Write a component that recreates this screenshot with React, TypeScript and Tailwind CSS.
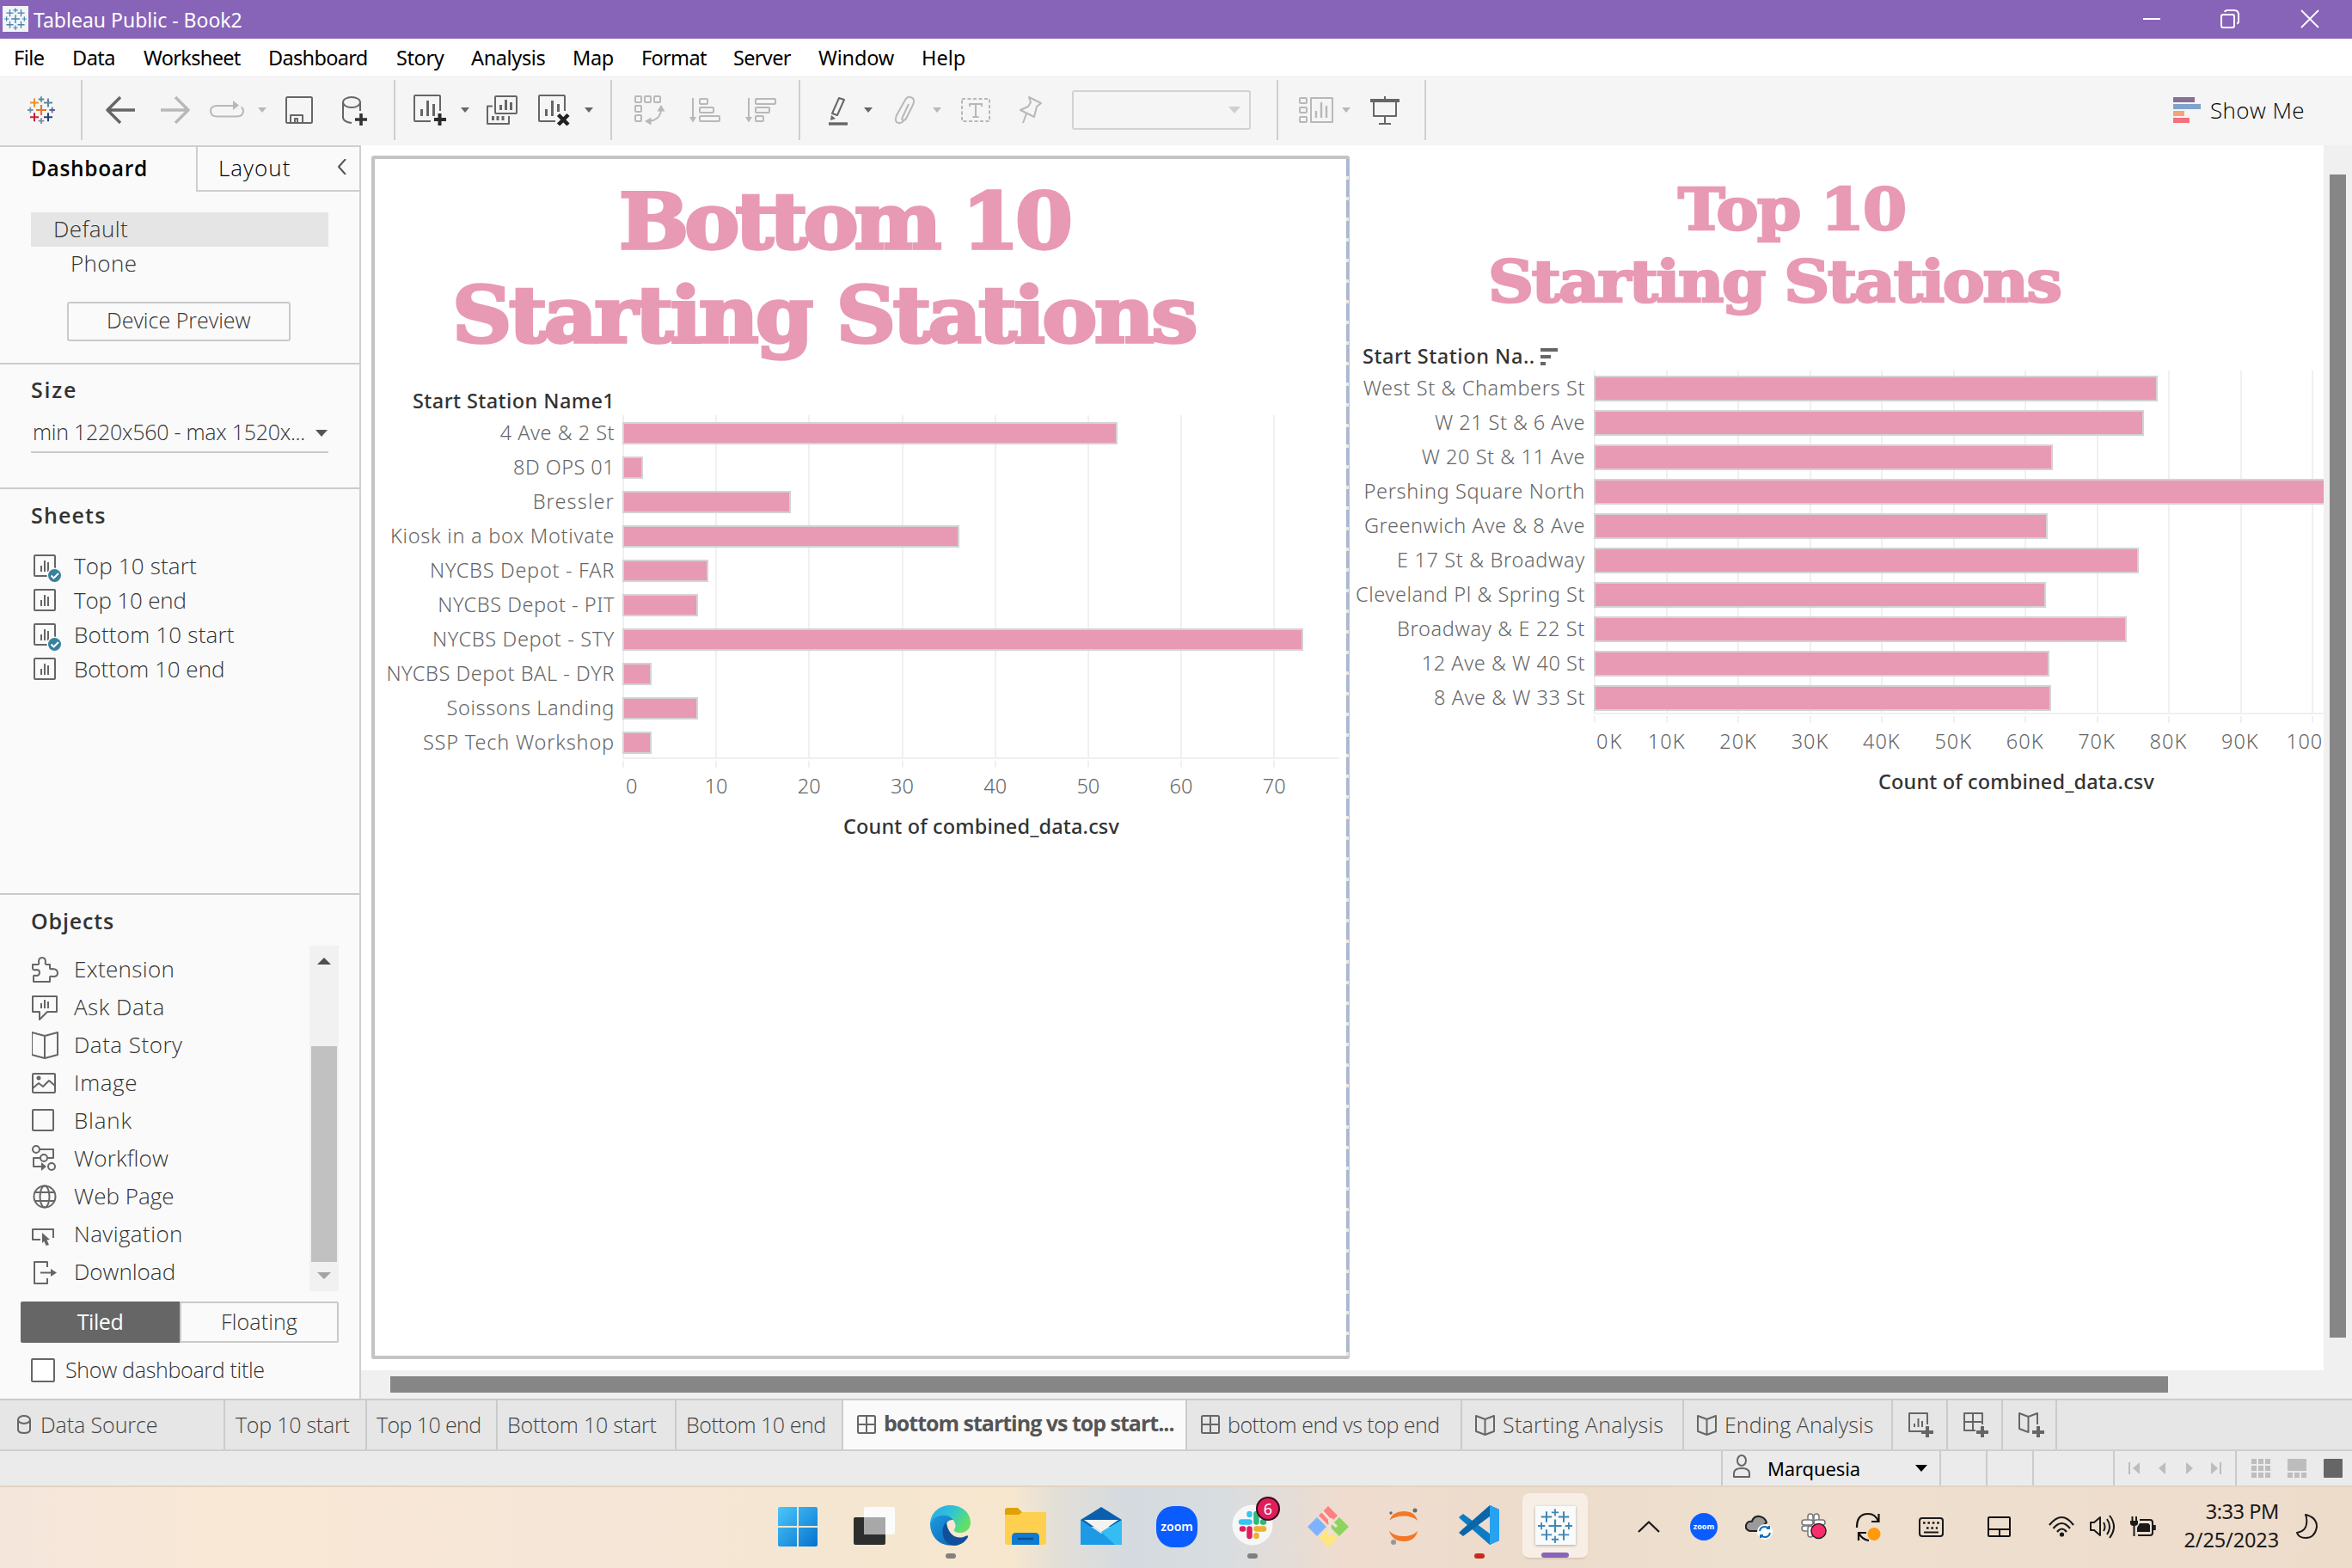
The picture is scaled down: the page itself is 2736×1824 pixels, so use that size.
import React, { useLayoutEffect, useRef, useState } from "react";

const UI = "font-['Open_Sans',sans-serif]";
const SEG = "font-['Noto_Sans',sans-serif]";

/* A single-line label whose letters are spread evenly over a given width. */
function T({ w, className = "", children }: { w: number; className?: string; children: string }) {
  const ref = useRef<HTMLSpanElement>(null);
  const [spacing, setSpacing] = useState(0);
  useLayoutEffect(() => {
    const el = ref.current;
    if (!el) return;
    el.style.letterSpacing = "0px";
    const natural = el.offsetWidth;
    const next = (w - natural) / children.length;
    el.style.letterSpacing = `${next}px`;
    setSpacing(next);
  }, [w, children]);
  return (
    <span ref={ref} style={{ letterSpacing: spacing }} className={`inline-block shrink-0 whitespace-pre ${className}`}>
      {children}
    </span>
  );
}

type SvgProps = { w: number; h: number; className?: string; children: React.ReactNode; color?: string; sw?: number };
function Svg({ w, h, className = "", children, color = "#666", sw = 2 }: SvgProps) {
  return (
    <svg width={w} height={h} viewBox={`0 0 ${w} ${h}`} className={`block shrink-0 ${className}`} fill="none" stroke={color} strokeWidth={sw} strokeLinejoin="round">
      {children}
    </svg>
  );
}

const crosses: [number, number, number, number, string][] = [
  [16, 16, 6, 2.2, "#e8762c"],
  [16, 3.5, 3.3, 1.8, "#59879b"],
  [8, 7.5, 5, 2, "#eb9129"],
  [24, 7.5, 5, 2, "#59879b"],
  [3.3, 16, 3.3, 1.8, "#7099a6"],
  [28.7, 16, 3.3, 1.8, "#5b6591"],
  [8, 24.3, 5, 2, "#c72035"],
  [24, 24.3, 5, 2, "#1f447e"],
  [16, 28.6, 3.3, 1.8, "#7b86ab"],
];
function TableauMark({ size, mono }: { size: number; mono?: boolean }) {
  return (
    <svg width={size} height={size} viewBox="0 0 32 32" className="block shrink-0">
      {crosses.map(([x, y, r, s, c], i) => (
        <path key={i} d={`M${x - r} ${y}H${x + r}M${x} ${y - r}V${y + r}`} stroke={mono ? "#3f86b3" : c} strokeWidth={mono ? s * 0.8 : s} />
      ))}
    </svg>
  );
}

function Caret({ className = "", color = "#666" }: { className?: string; color?: string }) {
  return (
    <Svg w={10} h={6} className={className} color="none">
      <path d="M0 0H10L5 6Z" fill={color} />
    </Svg>
  );
}
const Sep = ({ className = "" }: { className?: string }) => <div className={`h-[70px] w-[2px] shrink-0 bg-[#cfcfcf] ${className}`} />;

function TitleBar() {
  return (
    <div className="flex h-[45px] shrink-0 items-center bg-[#8764b8] pl-[3px] text-white">
      <div className="mb-[2px] flex h-[30px] w-[30px] items-center justify-center bg-[#f4f4f8]"><TableauMark size={26} mono /></div>
      <T w={243} className={`ml-[6px] mt-[2px] text-[23px] leading-none ${SEG}`}>Tableau Public - Book2</T>
      <div className="ml-auto flex items-center pb-[2px] pr-[38px]">
        <Svg w={20} h={20} color="#fff"><path d="M0 10H20" /></Svg>
        <Svg w={22} h={22} color="#fff" className="ml-[70px]">
          <rect x="1" y="6" width="15" height="15" rx="2" /><path d="M5 3Q5.500 1 8 1H16Q21 1 21 6V14Q21 16 19 16.500" />
        </Svg>
        <Svg w={22} h={22} color="#fff" sw={1.8} className="ml-[71px]"><path d="M1 1L21 21M21 1L1 21" /></Svg>
      </div>
    </div>
  );
}

const menu: [string, string, number][] = [
  ["File", "w-[68px]", 36], ["Data", "w-[83px]", 50], ["Worksheet", "w-[145px]", 113], ["Dashboard", "w-[149px]", 116],
  ["Story", "w-[87px]", 55], ["Analysis", "w-[118px]", 86], ["Map", "w-[80px]", 48], ["Format", "w-[107px]", 76],
  ["Server", "w-[99px]", 67], ["Window", "w-[120px]", 88], ["Help", "w-[80px]", 51],
];
function MenuBar() {
  return (
    <div className={`flex h-[43px] shrink-0 items-center bg-white pl-[16px] pt-[3px] text-[23.5px] leading-none text-black ${SEG}`}>
      {menu.map(([t, c, w]) => <div key={t} className={`shrink-0 ${c}`}><T w={w}>{t}</T></div>)}
    </div>
  );
}

const G = "#666";
const L = "#b8b8b8";
function Toolbar() {
  return (
    <div className="flex h-[81px] shrink-0 items-center bg-[#f5f5f5] pb-[1px] pl-[32px]">
      <TableauMark size={32} />
      <Sep className="ml-[30px]" />
      <Svg w={34} h={32} color={G} sw={3.4} className="ml-[27px]"><path d="M34 16H3M17 1L2 16L17 31" /></Svg>
      <Svg w={34} h={32} color={L} sw={3.4} className="ml-[30px]"><path d="M0 16H31M17 1L32 16L17 31" /></Svg>
      <Svg w={40} h={22} color={L} className="ml-[23px] mb-[4px]">
        <path d="M27 8H9Q1 8 1 14Q1 20.500 9 20.500H31Q39 20.500 39 14Q39 11 36.500 9.500" /><path d="M27 2L34 7.500L27 13Z" fill={L} stroke="none" />
      </Svg>
      <Caret className="ml-[16px]" color={L} />
      <Svg w={32} h={32} color={G} className="ml-[22px]"><rect x="1" y="1" width="30" height="30" rx="1.500" /><path d="M6 31V22H20V31M11 31V26H14V31" /></Svg>
      <Svg w={30} h={34} color={G} className="ml-[34px] mt-[2px]">
        <ellipse cx="11" cy="7" rx="10" ry="6" /><path d="M1 7V25Q2 30 11 31M21 7V17" /><path d="M22 20V34M15 27H29" stroke="#333" strokeWidth="3.600" />
      </Svg>
      <Sep className="ml-[30px]" />
      <Svg w={38} h={36} color={G} className="ml-[21px]">
        <path d="M31 19V2Q31 1 30 1H2Q1 1 1 2V30Q1 31 2 31H20" /><path d="M9.500 17V25M16.500 7V25M23.500 11V25" strokeWidth="3" strokeLinejoin="miter" /><path d="M30.500 22V36M24 29H38" stroke="#2b2b2b" strokeWidth="4" />
      </Svg>
      <Caret className="ml-[17px]" />
      <Svg w={36} h={34} color={G} className="ml-[20px] mb-[1px]">
        <rect x="10" y="1" width="25" height="20" rx="1" /><path d="M16.500 11V17M22.500 5V17M28.500 8V17" strokeWidth="3" /><path d="M7 12.500H1V33H26V24" /><path d="M7.500 24V29M13 24V29M19 24V29" strokeWidth="3" />
      </Svg>
      <Svg w={38} h={36} color={G} className="ml-[24px]">
        <path d="M31 19V2Q31 1 30 1H2Q1 1 1 2V30Q1 31 2 31H20" /><path d="M9.500 17V25M16.500 7V25M23.500 11V20" strokeWidth="3" /><path d="M23.500 23.500L35 35M35 23.500L23.500 35" stroke="#222" strokeWidth="4.500" />
      </Svg>
      <Caret className="ml-[16px]" />
      <Sep className="ml-[20px]" />
      <Svg w={36} h={36} color={L} className="ml-[26px]">
        <rect x="1" y="2" width="7" height="7" rx="1" /><rect x="12" y="2" width="7" height="7" rx="1" /><rect x="23" y="2" width="7" height="7" rx="1" /><rect x="1" y="13" width="7" height="7" rx="1" /><rect x="1" y="24" width="7" height="7" rx="1" />
        <path d="M31 18Q30 29 18 31" /><path d="M31 12L35.500 19.500H26.500ZM12 31L19.500 26.500V35.500Z" fill={L} stroke="none" />
      </Svg>
      <Svg w={36} h={30} color={L} className="ml-[28px]">
        <path d="M4 1V24" /><path d="M0 23H8L4 29.500Z" fill={L} stroke="none" /><rect x="12" y="2" width="9" height="6" rx="1" /><rect x="12" y="12" width="16" height="6" rx="1" /><rect x="12" y="22" width="23" height="6" rx="1" />
      </Svg>
      <Svg w={36} h={30} color={L} className="ml-[29px]">
        <path d="M4 1V24" /><path d="M0 23H8L4 29.500Z" fill={L} stroke="none" /><rect x="12" y="2" width="23" height="6" rx="1" /><rect x="12" y="12" width="16" height="6" rx="1" /><rect x="12" y="22" width="9" height="6" rx="1" />
      </Svg>
      <Sep className="ml-[26px]" />
      <Svg w={22} h={34} color={G} className="ml-[33px] mt-[2px]">
        <path d="M12 2L18 4L10 22L4 20Z" /><path d="M3 22L8 26L2 28Z" fill={G} stroke="none" /><path d="M0 32H22" strokeWidth="3.400" />
      </Svg>
      <Caret className="ml-[19px]" />
      <Svg w={25} h={34} color={L} className="ml-[25px]">
        <path d="M17 10L10 25Q8 29 11 29Q13 29 14.500 26L22 11Q25 3 19 2Q15 1 12 7L3 23Q0 31 5 32Q9 33 12 28" />
      </Svg>
      <Caret className="ml-[20px]" color={L} />
      <Svg w={34} h={28} color={L} className="ml-[23px]">
        <rect x="1" y="1" width="32" height="26" strokeDasharray="4 2.500" /><path d="M10 10V7H24V10M17 7V22M13.500 22H20.500" />
      </Svg>
      <Svg w={26} h={32} color={L} className="ml-[34px]">
        <path d="M11 1L25 8L20 12L17 24L1 16L10 12L13 7ZM8 20L4 31" />
      </Svg>
      <div className="ml-[35px] flex h-[46px] w-[208px] shrink-0 items-center justify-end rounded-[3px] border-2 border-[#d3d3d3] pr-[10px]">
        <Svg w={14} h={8} color="none"><path d="M0 0H14L7 8Z" fill="#cfcfcf" /></Svg>
      </div>
      <Sep className="ml-[30px]" />
      <Svg w={40} h={30} color={L} className="ml-[24px]">
        <rect x="1" y="1" width="8" height="6" rx="1" /><rect x="1" y="12" width="8" height="6" rx="1" /><rect x="1" y="23" width="8" height="6" rx="1" /><rect x="14" y="1" width="25" height="28" /><path d="M20 16V24M26 6V24M32 10V24" strokeWidth="2.400" />
      </Svg>
      <Caret className="ml-[10px]" color={L} />
      <Svg w={34} h={34} color={G} className="ml-[23px] mt-[2px]">
        <path d="M0 5H34" strokeWidth="4" /><path d="M17 0V4M4 6V23H30V6M17 23V32M10 32H24" />
      </Svg>
      <Sep className="ml-[29px]" />
      <div className="ml-auto flex items-center">
        <div className="flex w-[32px] flex-col gap-[2px]">
          <div className="h-[6px] w-[25px] bg-[#876f95]" /><div className="h-[6px] w-[32px] bg-[#7fa3cb]" /><div className="h-[6px] w-[13px] bg-[#f3a478]" /><div className="h-[6px] w-[19px] bg-[#f8707c]" />
        </div>
        <T w={110} className={`ml-[11px] mr-[55px] text-[26px] font-light leading-none text-black ${UI}`}>Show Me</T>
      </div>
    </div>
  );
}

function SheetIcon({ checked }: { checked?: boolean }) {
  return (
    <Svg w={34} h={34} className="mt-[6px]" color="#666">
      <rect x="1" y="1" width="24" height="24" rx="1" /><path d="M9 13V20M13 7V20M17 9V20" />
      {checked && <><circle cx="24.500" cy="24.500" r="9" fill="#fafafa" stroke="none" /><circle cx="24.500" cy="24.500" r="7.500" fill="#37819f" stroke="none" /><path d="M20.500 24.500L23.500 27.500L29 22" stroke="#fff" /></>}
    </Svg>
  );
}

const objects: [string, number, React.ReactNode][] = [
  ["Extension", 117, <path d="M1 10H7Q9 10 8 7Q8 2 12 2Q16 2 16 7Q15 10 17 10H21V14Q21 16 24 15Q30 15 30 20Q30 24 25 24Q21 23 21 25V30H2V24Q2 22 5 23Q9 23 9 19Q9 16 5 16Q1 17 1 14Z" />],
  ["Ask Data", 106, <path d="M1 3H29V21H18L9 30V21H1ZM11 11V17M15 7V17M19 9V17" />],
  ["Data Story", 127, <path d="M0 1L15 5L30 1V27L15 31L0 27ZM15 5V31" />],
  ["Image", 74, <><rect x="1" y="5" width="26" height="22" rx="1" /><path d="M1 22L8 16L13 20L20 13L27 19" /><circle cx="8" cy="10" r="1.500" fill="#666" /></>],
  ["Blank", 68, <rect x="1" y="3" width="24" height="24" rx="1" />],
  ["Workflow", 110, <><circle cx="5" cy="5" r="4" /><circle cx="14" cy="15" r="4" /><circle cx="23" cy="25" r="4" /><path d="M9 5H25V15H18M10 15H2V25H12" /><path d="M11 20L17 25L11 30Z" fill="#666" stroke="none" /></>],
  ["Web Page", 116, <><circle cx="15" cy="16" r="12.500" /><ellipse cx="15" cy="16" rx="5.500" ry="12.500" /><path d="M4 11H26M4 21H26" /></>],
  ["Navigation", 127, <><path d="M10 22H1V10H25V20" /><path d="M12 14L21 22L17.500 22.500L20 28L16.500 29L14.500 24L12 26Z" fill="#666" stroke="none" /></>],
  ["Download", 118, <><path d="M18 10V4H3V29H18V23M10 16.500H24" /><path d="M22 12L29 16.500L22 21Z" fill="#666" stroke="none" /></>],
];

const sheets: [string, number, boolean][] = [["Top 10 start", 143, true], ["Top 10 end", 131, false], ["Bottom 10 start", 187, true], ["Bottom 10 end", 175, false]];

function Sidebar() {
  return (
    <div className={`flex w-[420px] shrink-0 flex-col border-r-2 border-t-2 border-[#cfcfcf] bg-[#fafafa] text-[26px] leading-none text-[#333] [&_span]:mb-[2px] ${UI}`}>
      <div className="flex h-[52px] shrink-0">
        <div className="flex w-[228px] items-center pl-[36px] text-black"><T w={136} className="text-[24.5px] font-semibold">Dashboard</T></div>
        <div className="flex flex-1 items-center border-b-2 border-l-2 border-[#cfcfcf] pl-[24px] text-black">
          <T w={84} className="font-light">Layout</T>
          <Svg w={12} h={18} className="mb-[4px] ml-[54px]" color="#555"><path d="M10 0L2 9L10 18" /></Svg>
        </div>
      </div>
      <div className="ml-[36px] mt-[24px] flex h-[40px] w-[346px] shrink-0 items-center bg-[#e5e5e5] pl-[26px]"><T w={87} className="font-light">Default</T></div>
      <div className="flex h-[40px] shrink-0 items-center pl-[82px]"><T w={77} className="font-light">Phone</T></div>
      <div className="ml-[78px] mt-[24px] flex h-[46px] w-[260px] shrink-0 items-center rounded-[3px] border-2 border-[#c9c9c9] pb-[2px] pl-[44px]"><T w={168} className="text-[25px] font-light">Device Preview</T></div>
      <div className="mt-[25px] h-[2px] shrink-0 bg-[#cbcbcb]" />
      <div className="flex h-[60px] shrink-0 items-center pl-[36px]"><T w={54} className="text-[25px] font-semibold">Size</T></div>
      <div className="ml-[36px] flex h-[43px] w-[346px] shrink-0 items-center border-b-2 border-[#c9c9c9] pb-[2px] pl-[2px]">
        <T w={317} className="text-[25px] font-light">min 1220x560 - max 1520x...</T>
        <Svg w={14} h={8} className="ml-[12px]" color="none"><path d="M0 0H14L7 8Z" fill="#555" /></Svg>
      </div>
      <div className="mt-[40px] h-[2px] shrink-0 bg-[#cbcbcb]" />
      <div className="flex h-[62px] shrink-0 items-center pl-[36px]"><T w={88} className="text-[25px] font-semibold">Sheets</T></div>
      <div className="mt-[8px] flex flex-col">
        {sheets.map(([t, w, c]) => (
          <div key={t} className="flex h-[40px] items-center pl-[39px]"><SheetIcon checked={c} /><T w={w} className="ml-[13px] font-light">{t}</T></div>
        ))}
      </div>
      <div className="flex-1" />
      <div className="h-[2px] shrink-0 bg-[#cbcbcb]" />
      <div className="flex h-[59px] shrink-0 items-center pl-[36px] pt-[4px]"><T w={97} className="text-[25px] font-semibold">Objects</T></div>
      <div className="flex h-[402px] shrink-0">
        <div className="w-[360px] pt-[6px]">
          {objects.map(([t, w, icon]) => (
            <div key={t} className="flex h-[44px] items-center pl-[37px]">
              <Svg w={32} h={32}>{icon}</Svg>
              <T w={w} className="ml-[17px] font-light">{t}</T>
            </div>
          ))}
        </div>
        <div className="flex w-[34px] flex-col items-center bg-[#f1f1f1] pt-[14px]">
          <Svg w={16} h={8} color="none"><path d="M0 8H16L8 0Z" fill="#4f4f4f" /></Svg>
          <div className="mt-[95px] h-[251px] w-[30px] bg-[#c1c1c1]" />
          <Svg w={16} h={8} color="none" className="mt-[12px]"><path d="M0 0H16L8 8Z" fill="#a3a3a3" /></Svg>
        </div>
      </div>
      <div className="ml-[24px] mt-[12px] flex h-[48px] w-[370px] shrink-0 text-[25px]">
        <div className="flex w-[185px] items-center justify-center rounded-l-[2px] bg-[#666] text-white"><T w={54}>Tiled</T></div>
        <div className="flex w-[185px] items-center justify-center rounded-r-[2px] border-2 border-[#c9c9c9] font-light"><T w={89}>Floating</T></div>
      </div>
      <div className="mb-[19px] ml-[36px] mt-[18px] flex h-[28px] shrink-0 items-center text-[25px] font-light">
        <div className="h-[28px] w-[28px] rounded-[2px] border-2 border-[#666] bg-white" />
        <T w={232} className="ml-[12px]">Show dashboard title</T>
      </div>
    </div>
  );
}

type Row = [string, number, number];
const bottomRows: Row[] = [
  ["4 Ave & 2 St", 133, 576], ["8D OPS 01", 118, 24], ["Bressler", 95, 196], ["Kiosk in a box Motivate", 261, 392], ["NYCBS Depot - FAR", 215, 100],
  ["NYCBS Depot - PIT", 206, 88], ["NYCBS Depot - STY", 212, 792], ["NYCBS Depot BAL - DYR", 266, 34], ["Soissons Landing", 196, 88], ["SSP Tech Workshop", 223, 34],
];
const topRows: Row[] = [
  ["West St & Chambers St", 258, 656], ["W 21 St & 6 Ave", 175, 640], ["W 20 St & 11 Ave", 190, 534], ["Pershing Square North", 257, 870], ["Greenwich Ave & 8 Ave", 257, 528],
  ["E 17 St & Broadway", 219, 634], ["Cleveland Pl & Spring St", 267, 526], ["Broadway & E 22 St", 219, 620], ["12 Ave & W 40 St", 190, 530], ["8 Ave & W 33 St", 176, 532],
];

function Plot({ rows, width, pitch, ticks, top, bar }: { rows: Row[]; width: number; pitch: number; ticks: number; top: number; bar: number }) {
  return (
    <svg width={width} height={410} viewBox={`0 0 ${width} 410`} className="block shrink-0" shapeRendering="crispEdges">
      {Array.from({ length: ticks }, (_, i) => (
        <g key={i} fill="#f0f0f0"><rect x={Math.round(i * pitch)} y={0} width={2} height={398} /><rect x={Math.round(i * pitch)} y={402} width={2} height={8} /></g>
      ))}
      <rect x={0} y={398} width={width} height={2} fill="#f0f0f0" />
      {rows.map(([n, , v], i) => (
        <g key={n}><rect x={0} y={i * 40 + top} width={v} height={bar} fill="#d3d3d3" /><rect x={2} y={i * 40 + top + 2} width={v - 4} height={bar - 4} fill="#e899b4" /></g>
      ))}
    </svg>
  );
}

function Labels({ rows, className }: { rows: Row[]; className: string }) {
  return (
    <div className={`flex shrink-0 flex-col items-end ${className}`}>
      {rows.map(([n, w]) => <div key={n} className="flex h-[40px] items-center pt-[1px]"><T w={w}>{n}</T></div>)}
    </div>
  );
}

const CH = "font-['Noto_Sans',sans-serif] text-[23.5px] leading-none font-light text-[#666]";
const HEAD = "font-['DejaVu_Serif',serif] font-bold text-[#e899b4] [&_span]:origin-left [&_span]:scale-x-[1.08]";

function BottomChart() {
  return (
    <div className="relative ml-[12px] mt-[12px] h-[1400px] w-[1138px] shrink-0 rounded-[3px] border-4 border-[#c4c4c4] bg-white">
      <div className="absolute -right-[3px] top-0 h-[1392px] w-[3px] bg-[repeating-linear-gradient(180deg,#a9b7d1_0px,#a9b7d1_20px,#e9e9e4_20px,#e9e9e4_24px)]" />
      <div className={`mt-[18px] text-[89px] leading-[109px] [-webkit-text-stroke:3.5px_#e899b4] ${HEAD}`}>
        <div className="pl-[284px]"><T w={484}>Bottom 10</T></div>
        <div className="pl-[90px]"><T w={800}>Starting Stations</T></div>
      </div>
      <div className={CH}>
        <div className="mt-[30px] flex h-[32px] items-center pl-[44px] font-medium text-[#333]"><T w={235}>Start Station Name1</T></div>
        <div className="flex h-[410px]">
          <Labels rows={bottomRows} className="w-[279px]" />
          <div className="ml-[9px]"><Plot rows={bottomRows} width={834} pitch={108.2} ticks={8} top={8} bar={26} /></div>
        </div>
        <div className="flex h-[43px] items-center pl-[289px]">
          <div className="w-[54px] pl-[3px]">0</div>
          {[10, 20, 30, 40, 50, 60, 70].map((n) => <div key={n} className="w-[108.2px] text-center">{n}</div>)}
        </div>
        <div className="flex h-[52px] items-center pl-[545px] font-medium text-[#333]"><T w={321}>Count of combined_data.csv</T></div>
      </div>
    </div>
  );
}

function TopChart() {
  return (
    <div className="w-[1133px] shrink-0 overflow-hidden">
      <div className={`mt-[33px] text-[68px] leading-[83.6px] [-webkit-text-stroke:2.6px_#e899b4] ${HEAD}`}>
        <div className="pl-[382px]"><T w={245}>Top 10</T></div>
        <div className="pl-[161px]"><T w={616}>Starting Stations</T></div>
      </div>
      <div className={CH}>
        <div className="mt-[29.800px] flex h-[32px] items-center pl-[15px] font-medium text-[#333]">
          <T w={201}>Start Station Na..</T>
          <Svg w={20} h={20} color="none" className="ml-[6px]"><path d="M0 0H20V4H0ZM0 8H12V12H0ZM0 16H6V20H0Z" fill="#666" /></Svg>
        </div>
        <div className="flex h-[410px]">
          <Labels rows={topRows} className="w-[274px]" />
          <div className="ml-[10px]"><Plot rows={topRows} width={849} pitch={83.5} ticks={11} top={6} bar={30} /></div>
        </div>
        <div className="flex h-[43px] items-center pl-[285px]">
          <div className="w-[42px] shrink-0 pl-[2px]"><T w={31}>0K</T></div>
          {[10, 20, 30, 40, 50, 60, 70, 80, 90].map((n) => <div key={n} className="w-[83.4px] shrink-0 text-center"><T w={44}>{`${n}K`}</T></div>)}
          <div className="shrink-0 pl-[12px]"><T w={42}>100</T></div>
        </div>
        <div className="flex h-[52px] items-center pl-[615px] font-medium text-[#333]"><T w={321}>Count of combined_data.csv</T></div>
      </div>
    </div>
  );
}

function Canvas() {
  return (
    <div className="flex min-w-0 flex-1 flex-col bg-white">
      <div className="flex h-[1425px] shrink-0">
        <BottomChart />
        <TopChart />
        <div className="w-[33px] shrink-0 bg-[#f0f0f0] pl-[7px] pt-[34px]"><div className="h-[1353px] w-[19px] bg-[#868686]" /></div>
      </div>
      <div className="flex flex-1 bg-[#f0f0f0] pl-[34px] pt-[7px]"><div className="h-[19px] w-[2068px] bg-[#868686]" /></div>
    </div>
  );
}

const DashIcon = () => <Svg w={22} h={22}><rect x="1" y="1" width="20" height="20" rx="1.500" /><path d="M1 11H21M11 1V21" /></Svg>;
const BookIcon = () => <Svg w={23} h={24}><path d="M1 1L11.500 5L22 1V19L11.500 23L1 19ZM11.500 5V23" /></Svg>;

function Tabs() {
  const tab = "flex h-full shrink-0 items-center border-r-2 border-[#cbcbcb]";
  return (
    <div className={`flex h-[61px] shrink-0 items-center border-b-2 border-t-2 border-b-[#cfcfcf] border-t-[#cbcbcb] bg-[#e6e6e6] text-[25px] font-light leading-none text-[#444] ${UI}`}>
      <div className={`${tab} w-[262px] pl-[19px]`}>
        <Svg w={18} h={22} className="mb-[2px]"><ellipse cx="9" cy="5.500" rx="7" ry="4.500" /><path d="M2 5.500V17Q2 21 9 21Q16 21 16 17V5.500" /></Svg>
        <T w={136} className="ml-[10px]">Data Source</T>
      </div>
      <div className={`${tab} w-[165px] pl-[12px]`}><T w={133}>Top 10 start</T></div>
      <div className={`${tab} w-[152px] pl-[11px]`}><T w={122}>Top 10 end</T></div>
      <div className={`${tab} w-[208px] pl-[11px]`}><T w={174}>Bottom 10 start</T></div>
      <div className={`${tab} w-[194px] pl-[11px]`}><T w={163}>Bottom 10 end</T></div>
      <div className={`${tab} w-[400px] bg-[#fafafa] pb-[1px] pl-[16px]`}><DashIcon /><T w={338} className="mb-[4px] ml-[9px] font-bold text-[#555]">bottom starting vs top start...</T></div>
      <div className={`${tab} w-[320px] pb-[1px] pl-[16px]`}><DashIcon /><T w={247} className="ml-[9px] mt-[1px]">bottom end vs top end</T></div>
      <div className={`${tab} w-[258px] pl-[15px]`}><BookIcon /><T w={187} className="ml-[9px]">Starting Analysis</T></div>
      <div className={`${tab} w-[243px] pl-[15px]`}><BookIcon /><T w={173} className="ml-[9px]">Ending Analysis</T></div>
      <div className={`${tab} w-[64px] pl-[18px]`}><Svg w={30} h={30}><path d="M22 14V1H1V22H15M7 13V17M11.500 7V17M16 10V17" /><path d="M22 16V29M15 23H29" strokeWidth="4" /></Svg></div>
      <div className={`${tab} w-[64px] pl-[18px]`}><Svg w={30} h={30}><path d="M22 14V1H1V21H14M1 11H22M11 1V21" /><path d="M22 16V29M15 23H29" strokeWidth="4" /></Svg></div>
      <div className={`${tab} w-[63px] pl-[18px]`}><Svg w={30} h={30}><path d="M22 14V1L11.500 5L1 1V19L11.500 23V5" /><path d="M23 16V29M16 23H30" strokeWidth="4" /></Svg></div>
    </div>
  );
}

function StatusBar() {
  const cell = "flex h-full shrink-0 items-center border-l-2 border-[#cbcbcb]";
  const N = "#bdbdbd";
  return (
    <div className="flex h-[40px] shrink-0 bg-[#ebebeb] pl-[2002px]">
      <div className={`${cell} w-[254px] pl-[12px]`}>
        <Svg w={20} h={28} className="mb-[4px]"><ellipse cx="10" cy="7" rx="5" ry="6" /><path d="M1 26V22Q1 16 10 16Q19 16 19 22V26Z" /></Svg>
        <T w={108} className={`ml-[20px] text-[22px] leading-none text-black ${SEG}`}>Marquesia</T>
        <Svg w={14} h={8} color="none" className="ml-[64px]"><path d="M0 0H14L7 8Z" fill="#000" /></Svg>
      </div>
      <div className={`${cell} w-[54px]`} />
      <div className={`${cell} w-[54px]`} />
      <div className={`${cell} w-[94px]`} />
      <div className={`${cell} w-[142px] pl-[16px]`}>
        <Svg w={110} h={14} color="none">
          <path d="M0 0H2V14H0ZM13 0V14L5 7ZM43 0V14L35 7ZM67 0V14L75 7ZM96 0V14L104 7ZM106 0H108V14H106Z" fill={N} />
        </Svg>
      </div>
      <div className={`${cell} flex-1 pl-[17px]`}>
        <Svg w={23} h={22} color="none"><path d="M0 0H6V6H0ZM8 0H14V6H8ZM16 0H22V6H16ZM0 8H6V14H0ZM8 8H14V14H8ZM16 8H22V14H16ZM0 16H6V22H0ZM8 16H14V22H8ZM16 16H22V22H16Z" fill={N} /></Svg>
        <Svg w={23} h={22} color="none" className="ml-[19px]"><path d="M0 0H22V14H0ZM0 16H6V22H0ZM8 16H14V22H8ZM16 16H22V22H16Z" fill={N} /></Svg>
        <div className="ml-[19px] h-[22px] w-[22px] rounded-[1px] bg-[#666]" />
      </div>
    </div>
  );
}

function SlackPetals() {
  return (
    <g strokeWidth="6.500" strokeLinecap="round" fill="none">
      <path d="M20.500 11V12" stroke="#36c5f0" /><path d="M11 20.500H20.500" stroke="#36c5f0" />
      <path d="M28.500 11V20.500M36 20.500H37" stroke="#2eb67d" />
      <path d="M28.500 28.500H37M28.500 36V37" stroke="#ecb22e" />
      <path d="M20.500 28.500V37M12 28.500H13" stroke="#e01e5a" />
    </g>
  );
}

function Taskbar() {
  return (
    <div className="flex h-[96px] shrink-0 items-center border-t-2 border-[#e3d3c0] bg-[linear-gradient(90deg,#f5e6dc_0%,#f9e8d5_10%,#f6e6d8_26%,#f5e6d1_36%,#f7e7cf_43%,#e2dfd8_45%,#d5dae0_48%,#d8dde0_52%,#efdccf_57%,#ecdccb_66%,#eee0ce_74%,#eedece_85%,#eedccb_100%)] pb-[3px] pl-[904px]">
      <svg width="48" height="48" viewBox="0 0 48 48" className="shrink-0">
        <defs><linearGradient id="win" gradientUnits="userSpaceOnUse" x1="0" y1="0" x2="48" y2="48"><stop offset="0" stopColor="#4cc9fb" /><stop offset="1" stopColor="#0470cc" /></linearGradient></defs>
        <path d="M3 1H23V23H1V3Q1 1 3 1ZM25 1H45Q47 1 47 3V23H25ZM1 25H23V47H3Q1 47 1 45ZM25 25H47V45Q47 47 45 47H25Z" fill="url(#win)" />
      </svg>
      <svg width="50" height="48" viewBox="0 0 50 48" className="ml-[40px] shrink-0">
        <rect x="1" y="13" width="37" height="32" rx="2" fill="#2d2f2e" /><rect x="13" y="1" width="36" height="32" rx="2" fill="#fbfbfb" /><rect x="13" y="13" width="25" height="20" fill="#a8a8a8" />
      </svg>
      <div className="ml-[39px] flex h-[74px] flex-col items-center pt-[11px]">
        <svg width="49" height="49" viewBox="0 0 49 49">
          <defs>
            <linearGradient id="e1" x1="0" y1="0" x2="1" y2="0.500"><stop offset="0" stopColor="#2fa4ea" /><stop offset="0.500" stopColor="#2cc3d8" /><stop offset="1" stopColor="#63e063" /></linearGradient>
            <linearGradient id="e2" x1="0" y1="0" x2="1" y2="1"><stop offset="0" stopColor="#1b9de2" /><stop offset="1" stopColor="#0b5fb0" /></linearGradient>
          </defs>
          <path d="M1 22C2 9 12 1 25 1C38 1 48 10 48 21C48 29 42 33 36 33C31 33 28 31 29 29C31 27 31 24 29 20C22 9 8 10 1 22Z" fill="url(#e1)" />
          <path d="M1 22C6 11 21 9 28 18C21 17 17 24 19 31C21 40 31 47 38 43C28 53 1 48 1 22Z" fill="url(#e2)" />
          <path d="M20 20C11 30 16 48 30 48C38 47 43 42 45 38C45 36 44 36 42 37C31 42 21 34 20 20Z" fill="#10509a" />
        </svg>
        <div className="mt-[8px] h-[6px] w-[12px] rounded-full bg-[#857f7b]" />
      </div>
      <svg width="48" height="46" viewBox="0 0 48 46" className="ml-[39px] shrink-0">
        <path d="M0 4Q0 1 3 1H15L20 6H46Q48 6 48 9V16H0Z" fill="#e0a106" /><path d="M0 9H16L20 6H46Q48 6 48 9V41Q48 44 45 44H3Q0 44 0 41Z" fill="#ffd050" /><path d="M8 44V35Q8 30 13 30H35Q40 30 40 35V44Z" fill="#0f7bd0" /><path d="M15 37H33" stroke="#0a4f92" strokeWidth="2.500" />
      </svg>
      <svg width="48" height="46" viewBox="0 0 48 46" className="mb-[2px] ml-[40px] shrink-0">
        <path d="M0 16L24 1L48 16V24H0Z" fill="#0a5fae" /><path d="M0 16V45H48V16L24 32Z" fill="#1d9ae6" /><path d="M4 16H44L24 30Z" fill="#f3f3f3" /><path d="M24 30L48 16V45H40Z" fill="#34bdf2" />
      </svg>
      <div className={`ml-[40px] flex h-[48px] w-[48px] shrink-0 items-center justify-center rounded-[20px] bg-[#0b5cff] text-[14px] font-semibold leading-none text-white ${SEG}`}>zoom</div>
      <div className="relative ml-[40px] flex h-[74px] flex-col items-center pt-[11px]">
        <svg width="48" height="48" viewBox="0 0 48 48"><circle cx="24" cy="24" r="23.500" fill="#f7f7f7" /><SlackPetals /></svg>
        <div className="mt-[9px] h-[6px] w-[12px] rounded-full bg-[#7d7f80]" />
        <div className={`absolute -right-[8px] top-[2px] flex h-[28px] w-[28px] items-center justify-center rounded-full border-2 border-[#3c0a1c] bg-[#e01e5a] text-[18px] leading-none text-white ${SEG}`}>6</div>
      </div>
      <svg width="48" height="48" viewBox="0 0 48 48" className="ml-[40px] shrink-0">
        <path d="M24 0L35 11L24 22L13 11Z" fill="#ff8080" /><path d="M11 13L22 24L11 35L0 24Z" fill="#80b3ff" /><path d="M37 13L48 24L37 35L26 24Z" fill="#8dd35f" /><path d="M24 26L35 37L24 48L13 37Z" fill="#ffe680" /><path d="M17 6L28 18M26 16V32M27 18L34 24" stroke="#efe2d5" strokeWidth="3" /><circle cx="27" cy="17" r="3" fill="#efe2d5" /><circle cx="26" cy="31" r="3" fill="#efe2d5" />
      </svg>
      <svg width="36" height="48" viewBox="0 0 36 48" className="ml-[46px] shrink-0">
        <path d="M1 17Q5 6 18 6Q31 6 34 17Q28 11.500 18 11.500Q7 11.500 1 17ZM1 29Q5 41 18 41Q31 41 34 29Q28 35 18 35Q7 35 1 29Z" fill="#f37726" /><circle cx="31" cy="5" r="2.500" fill="#6b6c6c" /><circle cx="6" cy="42" r="3" fill="#989798" /><circle cx="3" cy="8" r="1.700" fill="#6b6c6c" />
      </svg>
      <div className="ml-[46px] flex h-[74px] flex-col items-center pt-[11px]">
        <svg width="48" height="48" viewBox="0 0 48 48"><path d="M36 1L47 6V42L36 47L3 18L0 15L5 11L36 34Z" fill="#0d7cc5" /><path d="M36 1V14L5 37L0 33L3 30Z" fill="#0a66a8" /><path d="M36 1L47 6V42L36 47Z" fill="#27a2ef" /></svg>
        <div className="mt-[9px] h-[6px] w-[12px] rounded-full bg-[#c92a1c]" />
      </div>
      <div className="ml-[26px] flex h-[77px] w-[76px] shrink-0 flex-col items-center rounded-[8px] border-b-2 border-[#dccabb] bg-[#f7eee6] pt-[15px]">
        <div className="flex h-[46px] w-[47px] items-center justify-center bg-[#f8fafb] shadow-[0_1px_3px_rgba(0,0,0,0.3)]"><TableauMark size={40} mono /></div>
        <div className="mt-[9px] h-[6px] w-[32px] rounded-full bg-[#8764b8]" />
      </div>
      <Svg w={26} h={14} color="#1a1a1a" sw={2.2} className="ml-[58px]"><path d="M1 13L13 1.500L25 13" /></Svg>
      <div className={`ml-[35px] flex h-[32px] w-[32px] shrink-0 items-center justify-center rounded-full bg-[#0b5cff] text-[9px] font-bold leading-none text-white ${SEG}`}>zoom</div>
      <Svg w={32} h={32} color="#222" className="ml-[32px]" sw={2}>
        <path d="M6 21Q0 20 1 14Q3 9 8 10Q10 3 17 4Q23 5 25 11L15 21Z" fill="#9a9a9a" /><circle cx="23" cy="22" r="9" fill="#fff" stroke="none" />
        <path d="M17 21Q18 16 23 16Q26 16 28 18V15M28 18H25M29 23Q28 28 23 28Q20 28 18 26V29M18 26H21" stroke="#0f6cbd" />
      </Svg>
      <Svg w={32} h={32} color="#777" className="ml-[33px]" sw={1.5}>
        <g fill="#fff"><rect x="8" y="1" width="6" height="13" rx="3" /><rect x="15" y="1" width="6" height="13" rx="3" /><rect x="1" y="8" width="13" height="6" rx="3" /><rect x="1" y="15" width="13" height="6" rx="3" /><rect x="8" y="15" width="6" height="13" rx="3" /><rect x="15" y="8" width="13" height="6" rx="3" /></g>
        <circle cx="20.500" cy="21" r="8.500" fill="#fa2d6d" stroke="#222" />
      </Svg>
      <Svg w={34} h={34} color="#111" className="ml-[31px]" sw={2.2}>
        <path d="M2 18Q2 2 15 2Q24 2 27 11M27.500 2V11H19M4 33V24H13M4 24Q8 32 16 33" strokeLinejoin="miter" /><circle cx="22" cy="25.500" r="7.500" fill="#ff9a0a" stroke="none" />
      </Svg>
      <Svg w={30} h={24} color="#1a1a1a" className="ml-[39px]"><rect x="2" y="2" width="27" height="21" rx="3" /><path d="M6 7.500H25M10 13.500H23" strokeWidth="2.600" strokeDasharray="2.600 2.800" /><path d="M7 18.500H24" /></Svg>
      <Svg w={30} h={26} color="#111" className="ml-[50px]" sw={2}><rect x="2" y="2" width="25" height="22" rx="1" /><path d="M2 16H27M15 16V24" /></Svg>
      <Svg w={32} h={26} color="#1a1a1a" className="ml-[42px]" sw={2.2}>
        <path d="M1 11Q15.500 -7 29 11M5.500 15Q15.500 3 25 15M10 19Q15.500 12 21 19" /><circle cx="15.500" cy="22" r="1.500" fill="#1a1a1a" />
      </Svg>
      <Svg w={34} h={28} color="#1a1a1a" className="ml-[15px]" sw={2}><path d="M2 9H6L13 3V24L6 18H2ZM17 9Q20 14 17 19M21 5Q27 14 21 23M24 1Q34 14 24 27" /></Svg>
      <Svg w={33} h={26} color="#1a1a1a" className="ml-[13px]" sw={2}>
        <path d="M12 5H24Q27 5 27 8V20Q27 23 24 23H10" /><path d="M12 9H22L24 11V19H9V14Z" fill="#1a1a1a" stroke="none" /><path d="M29 11V17" strokeWidth="3.500" /><path d="M1 6H10V9Q10 12 5.500 12Q1 12 1 9Z" fill="#1a1a1a" stroke="none" /><path d="M3.500 1V6M8 1V6M5.500 11V24" />
      </Svg>
      <div className={`ml-auto flex flex-col items-end pb-[1px] text-[23.5px] leading-[33px] text-[#1a1a1a] ${SEG}`}>
        <T w={85}>3:33 PM</T><T w={111}>2/25/2023</T>
      </div>
      <Svg w={27} h={30} color="#1a1a1a" className="ml-[19px] mr-[39px]" sw={2}><path d="M12 1Q25 4 25 15Q23 28 12 28Q4 28 2 22Q12 20 13 12Q14 6 12 1Z" /></Svg>
    </div>
  );
}

export default function App() {
  return (
    <div className="flex h-[1824px] w-[2736px] flex-col overflow-hidden bg-white">
      <TitleBar />
      <MenuBar />
      <Toolbar />
      <div className="flex h-[1458px] shrink-0">
        <Sidebar />
        <Canvas />
      </div>
      <Tabs />
      <StatusBar />
      <Taskbar />
    </div>
  );
}
